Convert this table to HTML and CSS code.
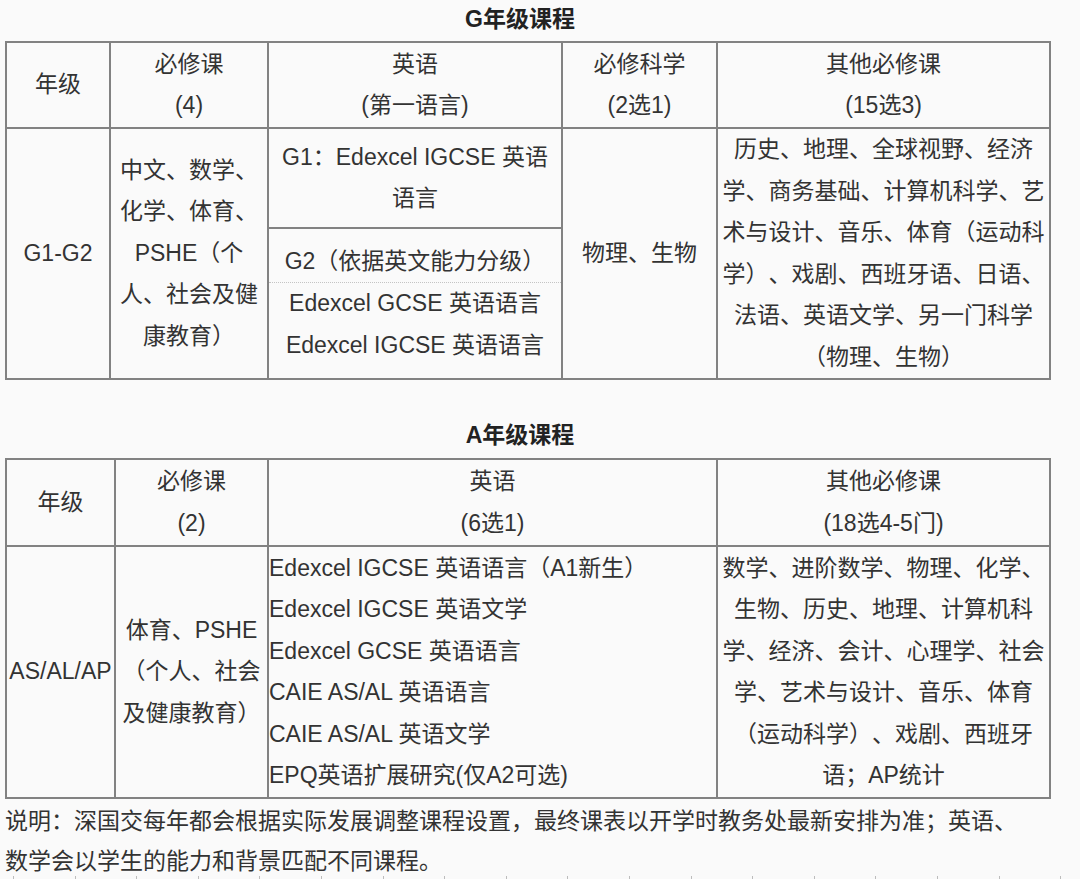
FILE: index.html
```html
<!DOCTYPE html>
<html lang="zh-CN">
<head>
<meta charset="utf-8">
<title>课程</title>
<link rel="stylesheet" href="styles.css">
</head>
<body>
<div class="page">
  <h2 class="title first">G年级课程</h2>
  <table class="grid">
    <colgroup>
      <col class="g1"><col class="g2"><col class="g3"><col class="g4"><col class="g5">
    </colgroup>
    <thead>
      <tr class="head head-g">
        <th>年级</th>
        <th>必修课<br>(4)</th>
        <th>英语<br>(第一语言)</th>
        <th>必修科学<br>(2选1)</th>
        <th>其他必修课<br>(15选3)</th>
      </tr>
    </thead>
    <tbody>
      <tr class="row-g1">
        <td rowspan="2">G1-G2</td>
        <td rowspan="2">中文、数学、<br>化学、体育、<br>PSHE（个<br>人、社会及健<br>康教育）</td>
        <td>G1：Edexcel IGCSE 英语<br>语言</td>
        <td rowspan="2">物理、生物</td>
        <td rowspan="2">历史、地理、全球视野、经济<br>学、商务基础、计算机科学、艺<br>术与设计、音乐、体育（运动科<br>学）、戏剧、西班牙语、日语、<br>法语、英语文学、另一门科学<br>（物理、生物）</td>
      </tr>
      <tr class="row-g2">
        <td><div class="dotted">G2（依据英文能力分级）</div>Edexcel GCSE 英语语言<br>Edexcel IGCSE 英语语言</td>
      </tr>
    </tbody>
  </table>

  <h2 class="title second">A年级课程</h2>
  <table class="grid">
    <colgroup>
      <col class="a1"><col class="a2"><col class="a3"><col class="a4">
    </colgroup>
    <thead>
      <tr class="head head-a">
        <th>年级</th>
        <th>必修课<br>(2)</th>
        <th>英语<br>(6选1)</th>
        <th>其他必修课<br>(18选4-5门)</th>
      </tr>
    </thead>
    <tbody>
      <tr class="row-a">
        <td>AS/AL/AP</td>
        <td>体育、PSHE<br>（个人、社会<br>及健康教育）</td>
        <td class="left">Edexcel IGCSE 英语语言（A1新生）<br>Edexcel IGCSE 英语文学<br>Edexcel GCSE 英语语言<br>CAIE AS/AL 英语语言<br>CAIE AS/AL 英语文学<br>EPQ英语扩展研究(仅A2可选)</td>
        <td>数学、进阶数学、物理、化学、<br>生物、历史、地理、计算机科<br>学、经济、会计、心理学、社会<br>学、艺术与设计、音乐、体育<br>（运动科学）、戏剧、西班牙<br>语；AP统计</td>
      </tr>
    </tbody>
  </table>

  <p class="note">说明：深国交每年都会根据实际发展调整课程设置，最终课表以开学时教务处最新安排为准；英语、<br>数学会以学生的能力和背景匹配不同课程。</p>
  <div class="ticks"></div>
</div>
</body>
</html>
```

FILE: styles.css
```css
html, body {
  margin: 0;
  padding: 0;
  background: #fafafa;
}

body {
  font-family: "Liberation Sans", "Noto Sans CJK SC", sans-serif;
  font-size: 23px;
  color: #333;
  overflow: hidden;
  height: 879px;
  text-spacing-trim: space-all;
}

.page {
  padding-left: 5px;
  width: 1046px;
}

.title {
  margin: 0;
  font-size: 23px;
  font-weight: bold;
  color: #222;
  line-height: 38px;
  text-align: center;
  padding-right: 16px;
}

.title.first {
  margin-bottom: 3px;
}

.title.second {
  margin-top: 36px;
  margin-bottom: 4px;
}

.grid {
  border-collapse: collapse;
  table-layout: fixed;
  width: 1046px;
}

.grid th,
.grid td {
  border: 2px solid #828282;
  padding: 0;
  font-weight: normal;
  text-align: center;
  vertical-align: middle;
  line-height: 41.5px;
  white-space: nowrap;
}

.g1 { width: 104px; }
.g2 { width: 158px; }
.g3 { width: 294px; }
.g4 { width: 155px; }
.g5 { width: 333px; }

.a1 { width: 109px; }
.a2 { width: 153px; }
.a3 { width: 449px; }
.a4 { width: 333px; }

.head-g { height: 86px; }
.head-a { height: 87px; }
.row-g1 { height: 100px; }
.row-g2 { height: 150px; }
.row-a { height: 252px; }

.dotted {
  border-bottom: 1px dotted #c4c4c4;
}

.left {
  text-align: left !important;
}

.note {
  margin: 2px 0 0;
  line-height: 40px;
  color: #333;
  white-space: nowrap;
}

.ticks {
  margin-top: -5px;
  margin-left: 8px;
  height: 5px;
  width: 1070px;
  background: repeating-linear-gradient(90deg, #bdbdbd 0 1px, transparent 1px 61.6px);
}
```
